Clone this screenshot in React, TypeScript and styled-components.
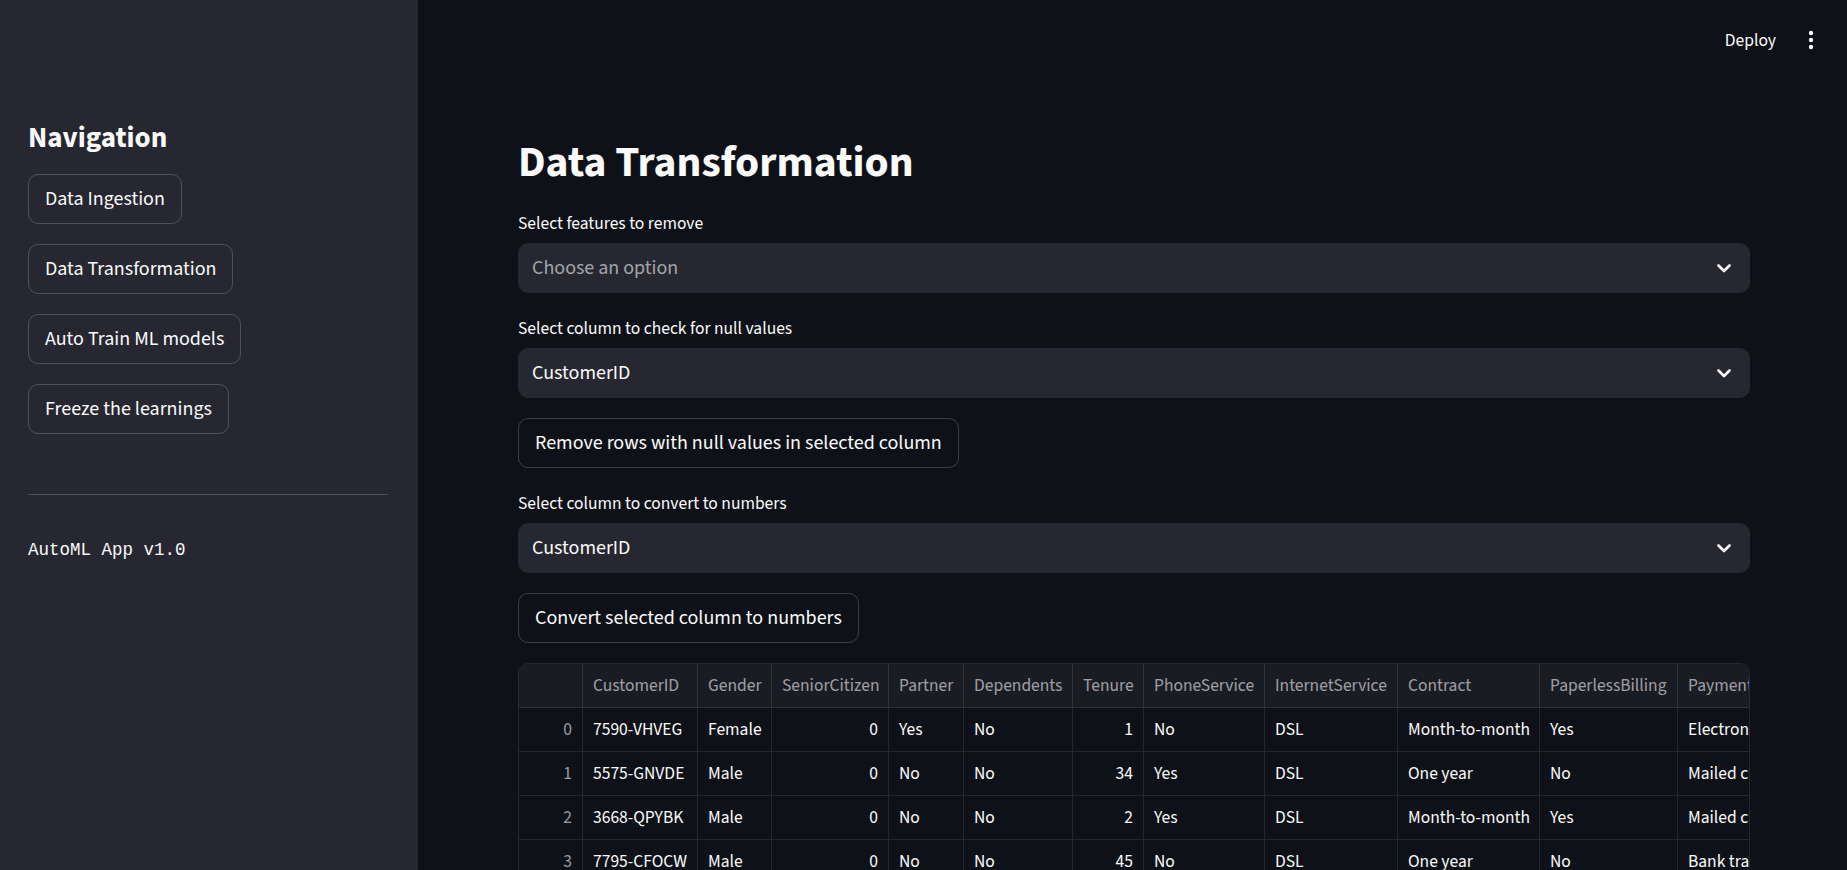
import React from "react";
import styled, { createGlobalStyle } from "styled-components";

const GlobalStyle = createGlobalStyle`
  html, body {
    margin: 0;
    padding: 0;
    background: #0e1117;
    color: #fafafa;
    font-family: "Source Sans Pro", "Source Sans 3", Lato, sans-serif;
  }
  * { box-sizing: border-box; }
`;

const SANS = `"Source Sans Pro", "Source Sans 3", Lato, sans-serif`;

const AppShell = styled.div`
  display: flex;
  width: 100vw;
  height: 100vh;
  overflow: hidden;
`;

const Sidebar = styled.aside`
  width: 418px;
  flex-shrink: 0;
  background: #262730;
  padding: 120px 30px 0 28px;
  display: flex;
  flex-direction: column;
`;

const SideHeading = styled.h2`
  margin: 0 0 18px 0;
  font-family: ${SANS};
  font-weight: 700;
  font-size: 29px;
  line-height: 36px;
  color: #fafafa;
`;

const NavList = styled.div`
  display: flex;
  flex-direction: column;
  align-items: flex-start;
  gap: 20px;
`;

const Button = styled.button`
  height: 50px;
  padding: 0 16px;
  border: 1px solid rgba(250, 250, 250, 0.2);
  border-radius: 10px;
  background: transparent;
  color: #fafafa;
  font-family: ${SANS};
  font-size: 20px;
  line-height: 1;
  cursor: pointer;
  white-space: nowrap;
`;

const Divider = styled.hr`
  margin: 60px 0 41px 0;
  border: none;
  border-top: 1px solid rgba(250, 250, 250, 0.2);
  width: 100%;
`;

const Version = styled.div`
  font-family: "Liberation Mono", "DejaVu Sans Mono", monospace;
  font-size: 17.5px;
  line-height: 28px;
  color: #fafafa;
`;

const Main = styled.main`
  flex: 1;
  min-width: 0;
  display: flex;
  flex-direction: column;
  overflow: hidden;
`;

const TopBar = styled.header`
  height: 80px;
  flex-shrink: 0;
  display: flex;
  justify-content: flex-end;
  align-items: center;
  padding-right: 26px;
  gap: 13px;
`;

const DeployButton = styled.button`
  background: transparent;
  border: none;
  color: #fafafa;
  font-family: ${SANS};
  font-size: 17.5px;
  padding: 0 12px;
  height: 40px;
  cursor: pointer;
`;

const MenuButton = styled.button`
  width: 20px;
  height: 40px;
  padding: 0;
  background: transparent;
  border: none;
  display: flex;
  align-items: center;
  justify-content: center;
  cursor: pointer;
`;

const Content = styled.div`
  padding: 56px 97px 0 100px;
  display: flex;
  flex-direction: column;
  gap: 20px;
`;

const Title = styled.h1`
  margin: 0;
  font-family: ${SANS};
  font-weight: 700;
  font-size: 43.5px;
  line-height: 52px;
  color: #fafafa;
`;

const Field = styled.div`
  display: flex;
  flex-direction: column;
`;

const Label = styled.label`
  font-family: ${SANS};
  font-size: 17.5px;
  line-height: 31px;
  margin-bottom: 4px;
  color: #fafafa;
`;

const SelectBox = styled.div<{ $placeholder?: boolean }>`
  height: 50px;
  background: #262730;
  border: 1px solid #262730;
  border-radius: 10px;
  display: flex;
  align-items: center;
  justify-content: space-between;
  padding: 0 17px 0 13px;
  font-family: ${SANS};
  font-size: 20px;
  color: ${(p) => (p.$placeholder ? "rgba(250, 250, 250, 0.6)" : "#fafafa")};
`;

const ButtonRow = styled.div`
  display: flex;
`;

const TableFrame = styled.div`
  border: 1px solid rgba(250, 250, 250, 0.1);
  border-radius: 10px;
  overflow: hidden;
  width: 100%;
`;

const COLS = [64, 115, 74, 117, 75, 109, 71, 121, 133, 142, 138, 240];

const GridRow = styled.div<{ $header?: boolean }>`
  display: grid;
  grid-template-columns: ${COLS.map((c) => `${c}px`).join(" ")};
  height: 44px;
  background: ${(p) => (p.$header ? "#1a1c24" : "#0e1117")};
`;

const Cell = styled.div<{ $right?: boolean; $muted?: boolean }>`
  border-right: 1px solid rgba(250, 250, 250, 0.1);
  border-bottom: 1px solid rgba(250, 250, 250, 0.1);
  padding: 0 10px;
  display: flex;
  align-items: center;
  justify-content: ${(p) => (p.$right ? "flex-end" : "flex-start")};
  font-family: ${SANS};
  font-size: 17.5px;
  color: ${(p) => (p.$muted ? "rgba(250, 250, 250, 0.6)" : "#fafafa")};
  white-space: nowrap;
  overflow: hidden;
`;

const Chevron = () => (
  <svg width="16" height="16" viewBox="0 0 16 16" fill="none">
    <path d="M2.5 5.5 L8 11 L13.5 5.5" stroke="#fafafa" strokeWidth="2.6" strokeLinecap="round" strokeLinejoin="round" />
  </svg>
);

const Dots = () => (
  <svg width="6" height="20" viewBox="0 0 6 20">
    <circle cx="3" cy="3" r="2.2" fill="#fafafa" />
    <circle cx="3" cy="10" r="2.2" fill="#fafafa" />
    <circle cx="3" cy="17" r="2.2" fill="#fafafa" />
  </svg>
);

const headers = [
  "",
  "CustomerID",
  "Gender",
  "SeniorCitizen",
  "Partner",
  "Dependents",
  "Tenure",
  "PhoneService",
  "InternetService",
  "Contract",
  "PaperlessBilling",
  "PaymentMethod",
];

const rows: string[][] = [
  ["0", "7590-VHVEG", "Female", "0", "Yes", "No", "1", "No", "DSL", "Month-to-month", "Yes", "Electronic check"],
  ["1", "5575-GNVDE", "Male", "0", "No", "No", "34", "Yes", "DSL", "One year", "No", "Mailed check"],
  ["2", "3668-QPYBK", "Male", "0", "No", "No", "2", "Yes", "DSL", "Month-to-month", "Yes", "Mailed check"],
  ["3", "7795-CFOCW", "Male", "0", "No", "No", "45", "No", "DSL", "One year", "No", "Bank transfer (automatic)"],
  ["4", "9237-HQITU", "Female", "0", "No", "No", "2", "Yes", "Fiber optic", "Month-to-month", "Yes", "Electronic check"],
  ["5", "9305-CDSKC", "Female", "0", "No", "No", "8", "Yes", "Fiber optic", "Month-to-month", "Yes", "Electronic check"],
];

const rightCols = new Set([0, 3, 6]);

export default function App() {
  return (
    <>
      <GlobalStyle />
      <AppShell>
        <Sidebar>
          <SideHeading>Navigation</SideHeading>
          <NavList>
            <Button>Data Ingestion</Button>
            <Button>Data Transformation</Button>
            <Button>Auto Train ML models</Button>
            <Button>Freeze the learnings</Button>
          </NavList>
          <Divider />
          <Version>AutoML App v1.0</Version>
        </Sidebar>
        <Main>
          <TopBar>
            <DeployButton>Deploy</DeployButton>
            <MenuButton aria-label="menu">
              <Dots />
            </MenuButton>
          </TopBar>
          <Content>
            <Title>Data Transformation</Title>
            <Field>
              <Label>Select features to remove</Label>
              <SelectBox $placeholder>
                <span>Choose an option</span>
                <Chevron />
              </SelectBox>
            </Field>
            <Field>
              <Label>Select column to check for null values</Label>
              <SelectBox>
                <span>CustomerID</span>
                <Chevron />
              </SelectBox>
            </Field>
            <ButtonRow>
              <Button>Remove rows with null values in selected column</Button>
            </ButtonRow>
            <Field>
              <Label>Select column to convert to numbers</Label>
              <SelectBox>
                <span>CustomerID</span>
                <Chevron />
              </SelectBox>
            </Field>
            <ButtonRow>
              <Button>Convert selected column to numbers</Button>
            </ButtonRow>
            <TableFrame>
              <GridRow $header>
                {headers.map((h, i) => (
                  <Cell key={i} $muted>
                    {h}
                  </Cell>
                ))}
              </GridRow>
              {rows.map((r, ri) => (
                <GridRow key={ri}>
                  {r.map((v, ci) => (
                    <Cell key={ci} $right={rightCols.has(ci)} $muted={ci === 0}>
                      {v}
                    </Cell>
                  ))}
                </GridRow>
              ))}
            </TableFrame>
          </Content>
        </Main>
      </AppShell>
    </>
  );
}
